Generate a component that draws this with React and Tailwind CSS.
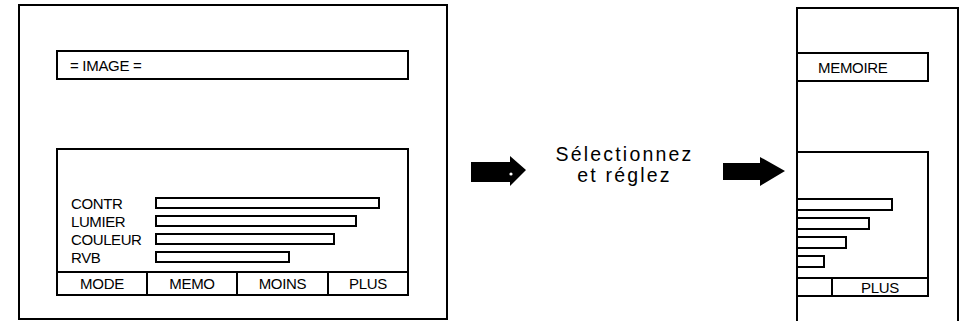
const font = { fontFamily: '"Liberation Sans", Arial, sans-serif' };

const rows = [
  { label: 'CONTR', w: 'w-[225px]' },
  { label: 'LUMIER', w: 'w-[202px]' },
  { label: 'COULEUR', w: 'w-[180px]' },
  { label: 'RVB', w: 'w-[135px]' },
];

const sideBars = ['w-[95px]', 'w-[72px]', 'w-[49px]', 'w-[27px]'];

function Arrow({ small }) {
  if (small) {
    return (
      <svg width="55" height="30" viewBox="0 0 55 30" className="mt-[12px] shrink-0">
        <polygon points="0,6 39,6 39,0 55,14 39,30 39,26 0,26" fill="#000" />
        <circle cx="40" cy="18" r="1.6" fill="#fff" />
      </svg>
    );
  }
  return (
    <svg width="62" height="30" viewBox="0 0 62 30" className="mt-[13px] shrink-0">
      <polygon points="0,6 37,6 37,0 62,14 37,29 37,23 0,23" fill="#000" />
    </svg>
  );
}

export default function App() {
  return (
    <div className="w-[963px] h-[321px] bg-white text-black flex items-start overflow-hidden" style={font}>
      {/* left screen */}
      <div className="ml-[18px] mt-[4px] w-[430px] h-[316px] border-2 border-black shrink-0 flex flex-col">
        <div className="ml-[36px] mt-[44px] w-[353px] h-[30px] border-2 border-black flex items-center pl-[12px] text-[15px] leading-none tracking-[-0.3px]">
          = IMAGE =
        </div>
        <div className="ml-[36px] mt-[68px] w-[353px] h-[148px] border-2 border-black flex flex-col">
          <div className="flex-1 flex flex-col justify-end pl-[13px] pb-[5px]">
            {rows.map((r) => (
              <div key={r.label} className="h-[18px] flex items-center">
                <span className="w-[84px] text-[15px] leading-none tracking-[-0.4px]">{r.label}</span>
                <div className={`${r.w} h-[12px] border-2 border-black`} />
              </div>
            ))}
          </div>
          <div className="h-[23px] border-t-2 border-black grid grid-cols-[90px_90px_91px_1fr] text-[15px] leading-none tracking-[-0.3px]">
            <div className="border-r-2 border-black flex items-center justify-center">MODE</div>
            <div className="border-r-2 border-black flex items-center justify-center">MEMO</div>
            <div className="border-r-2 border-black flex items-center justify-center">MOINS</div>
            <div className="flex items-center justify-center">PLUS</div>
          </div>
        </div>
      </div>

      {/* middle */}
      <div className="mt-[144px] ml-[23px] flex items-start">
        <Arrow small />
        <div className="w-[197px] text-center text-[19.5px] leading-[21px] tracking-[2.2px]">
          Sélectionnez
          <br />
          et réglez
        </div>
        <Arrow />
      </div>

      {/* right screen, cropped */}
      <div className="ml-[11px] mt-[7px] w-[163px] h-[320px] border-l-2 border-r-2 border-t-2 border-black shrink-0 flex flex-col pr-[28px]">
        <div className="mt-[43px] h-[30px] border-y-2 border-r-2 border-black flex items-center pl-[20px] text-[15px] leading-none tracking-[-0.3px]">
          MEMOIRE
        </div>
        <div className="mt-[69px] h-[146px] border-y-2 border-r-2 border-black flex flex-col">
          <div className="flex-1 flex flex-col justify-end pb-[6px]">
            {sideBars.map((w) => (
              <div key={w} className="h-[19px] flex items-center">
                <div className={`${w} h-[13px] border-y-2 border-r-2 border-black`} />
              </div>
            ))}
          </div>
          <div className="h-[18px] border-t-2 border-black flex text-[15px] leading-none tracking-[-0.3px]">
            <div className="w-[35px] border-r-2 border-black" />
            <div className="flex-1 flex items-center justify-center">PLUS</div>
          </div>
        </div>
      </div>
    </div>
  );
}
